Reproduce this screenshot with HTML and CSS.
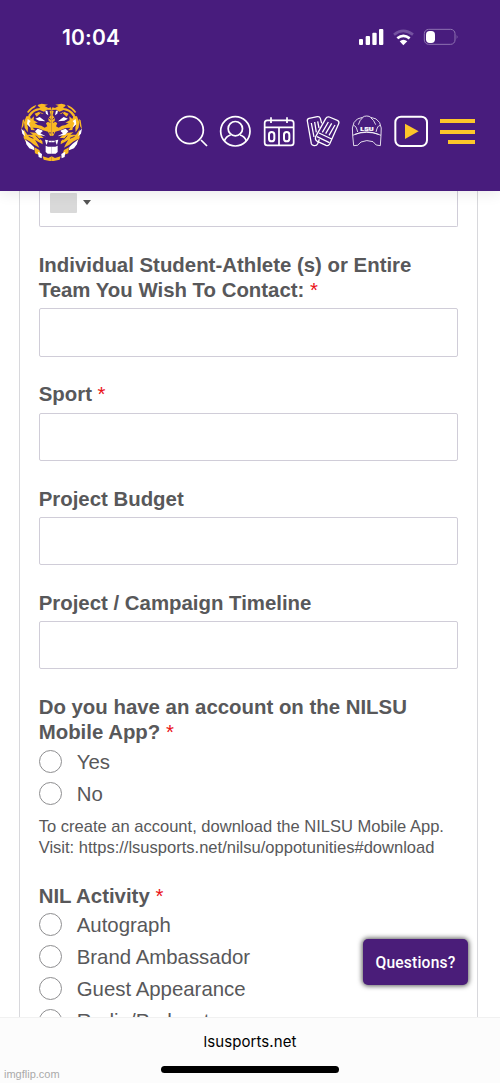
FILE: index.html
```html
<!DOCTYPE html>
<html lang="en">
<head>
<meta charset="utf-8">
<title>lsusports.net</title>
<link rel="stylesheet" href="styles.css">
</head>
<body>
<div class="phone">
  <header class="header">
    <div class="status">
      <span class="time">10:04</span>
      <svg class="status-icons" viewBox="54 36 306 60" fill="#fff">
        <rect x="57" y="72" width="12" height="18" rx="3"/>
        <rect x="77" y="63" width="13" height="27" rx="3"/>
        <rect x="97" y="53" width="13" height="37" rx="3"/>
        <rect x="117" y="42" width="13" height="48" rx="3"/>
        <g fill="none" stroke="#fff" stroke-width="8">
          <path d="M162 59Q190 36 219 59" stroke="#7452a0"/>
          <path d="M172 70Q190 55 209 70"/>
        </g>
        <path d="M179 79Q190 70 202 79L190 91Z"/>
        <rect x="253" y="43" width="92" height="45" rx="13" fill="none" stroke="#8e73b1" stroke-width="3"/>
        <rect x="258" y="48" width="27" height="36" rx="11"/>
        <path d="M350 59Q355 65 350 72Z" fill="#8e73b1"/>
      </svg>
    </div>
    <div class="nav">
      <svg class="logo" viewBox="62 38 184 174">
        <g id="half">
          <g fill="#f9b923">
            <path d="M80 65Q92 49 108 44L104 51Q92 56 84 68ZM84 74Q97 54 120 53L112 46Q112 42 124 40L143 43 133 47 144 53 152 51 154 59 140 58 131 64 118 59Q102 62 95 72L86 84Z"/>
            <path d="M154 60L148 62 151 75 144 84 145 93 137 99 141 108 133 112 123 106 112 104 103 98 113 97 100 90 101 78 92 86 88 77 78 78 71 96 73 112 82 126 83 112 80 100 90 110 92 119 105 120 97 112 112 113 128 120 143 124 149 136 154 137Z"/>
            <path d="M70 117L81 133 98 133 88 126 106 127 120 134 130 143 116 143 126 153 127 162 113 154 104 148 112 162 117 172 101 163 90 154 74 145 83 157 77 155 70 142Z"/>
            <path d="M102 171L117 179 123 196 104 189ZM127 198L144 203 154 198V212H148L130 208Z"/>
            <path d="M67 90L72 86 69 107 63 117ZM103 70L117 64 130 70 118 71 109 79Z"/>
          </g>
          <g fill="#fff">
            <path d="M105 85L118 80 135 93 116 91ZM135 61L141 61 144 75 137 70Z"/>
            <path d="M82 86L91 92 86 99 91 112 80 102ZM63 115L71 123 74 138 66 130ZM112 115L129 121 120 129 136 138 113 133 104 123Z"/>
            <path d="M75 148L91 160 101 170 102 180 87 174 78 162ZM113 184L125 191 124 204 115 200Z"/>
            <path d="M134 148L143 150 141 158 138 164ZM144 151H154V156H146ZM136 166L143 169H154V190H142L136 185Z"/>
          </g>
          <path fill="none" stroke="#481c7d" stroke-width="3" d="M141 79L151 87M137 91L150 96M118 67L131 77M107 136L119 149M126 121L138 129M85 138L99 144M149 125V130"/>
        </g>
        <use href="#half" transform="translate(308 0) scale(-1 1)"/>
      </svg>
      <div class="icons">
        <svg class="icon" viewBox="24 24 108 108"><circle cx="74" cy="75" r="41"/><path d="M108 105L126 123"/></svg>
        <svg class="icon" viewBox="156 24 108 108"><circle cx="211" cy="79" r="44"/><circle cx="211" cy="71" r="21.500"/><path d="M178 108Q183 94 197 90M244 108Q239 94 225 90"/></svg>
        <svg class="icon" viewBox="288 24 108 108"><rect x="299" y="46" width="87" height="75" rx="8"/><path d="M318 37V54M366 37V54M299 67H386M342 67V122"/><rect x="312" y="81" width="16" height="28" rx="8" stroke-width="6"/><rect x="357" y="81" width="16" height="28" rx="8" stroke-width="6"/></svg>
        <svg class="icon thin" viewBox="15 24 108 108">
          <path d="M58 103L53 116Q50 123 42 122Q36 121 34 116L22 48Q21 42 27 40L52 35Q59 34 61 40L65 55M34 54L42 96M44 51L49 82M53 49L57 69"/>
          <path d="M47 95L77 41Q81 34 88 36L112 46Q119 49 116 56L89 117Q85 124 78 121L52 109Q44 105 47 95ZM57 84L95 102M51 95L88 113M85 51L67 82M95 55L77 86M105 60L87 91"/>
        </svg>
        <svg class="icon cap" viewBox="147 24 108 108">
          <path d="M158 91Q151 41 188 37Q192 33 200 33Q208 33 212 37Q250 41 243 91M158 91Q199 70 243 91L241 122Q227 124 219 110Q200 103 183 111Q174 125 161 122ZM165 88Q200 76 236 88M188 38Q179 45 175 59M212 38Q222 45 227 59M161 62Q168 60 173 81M240 62Q233 60 228 81"/>
          <text x="201" y="77" textLength="40" lengthAdjust="spacingAndGlyphs">LSU</text>
        </svg>
        <svg class="icon" viewBox="279 24 108 108"><rect x="286" y="35" width="95" height="88" rx="17" stroke-width="6"/><path class="gold" d="M315 56L356 79 315 102Z"/></svg>
        <svg class="icon menu" viewBox="411 24 126 108"><path class="gold" d="M420 42H525V54H420ZM420 75H525V87H420ZM444 105H525V117H444Z"/></svg>
      </div>
    </div>
  </header>

  <main class="page">
    <form class="form">
      <div class="input phone-input"><span class="flag"></span><span class="caret"></span></div>
      <label class="label">Individual Student-Athlete (s) or Entire<br>Team You Wish To Contact: <i>*</i></label>
      <div class="input"></div>
      <label class="label">Sport <i>*</i></label>
      <div class="input"></div>
      <label class="label">Project Budget</label>
      <div class="input"></div>
      <label class="label">Project / Campaign Timeline</label>
      <div class="input"></div>
      <div class="label">Do you have an account on the NILSU<br>Mobile App? <i>*</i></div>
      <div class="options">
        <div class="option"><span class="radio"></span>Yes</div>
        <div class="option"><span class="radio"></span>No</div>
      </div>
      <p class="help">To create an account, download the NILSU Mobile App.<br>Visit: https://lsusports.net/nilsu/oppotunities#download</p>
      <div class="label">NIL Activity <i>*</i></div>
      <div class="options activity">
        <div class="option"><span class="radio"></span>Autograph</div>
        <div class="option"><span class="radio"></span>Brand Ambassador</div>
        <div class="option"><span class="radio"></span>Guest Appearance</div>
        <div class="option"><span class="radio"></span>Radio/Podcast</div>
      </div>
    </form>
  </main>
  <div class="questions">Questions?</div>

  <footer class="browser-bar">
    <div class="address">lsusports.net</div>
    <div class="home-indicator"></div>
    <span class="watermark">imgflip.com</span>
  </footer>
</div>
</body>
</html>
```
FILE: styles.css
```css
* { box-sizing: border-box; }
body { margin: 0; background: #fff; }
.phone {
  position: relative;
  width: 500px;
  height: 1083px;
  display: flex;
  flex-direction: column;
  overflow: hidden;
  font-family: "Liberation Sans", Arial, sans-serif;
  color: #58585a;
}
.header {
  height: 191px;
  flex: none;
  background: #481c7d;
  position: relative;
  z-index: 1;
  box-shadow: 0 2px 14px rgba(0, 0, 0, .09);
}
.status {
  height: 74px;
  padding: 0 40px 0 62px;
  display: flex;
  align-items: center;
  justify-content: space-between;
}
.time { font: 600 21px/26px Inter, sans-serif; letter-spacing: .15px; padding-top: 2px; color: #fff; }
.status-icons { width: 102px; height: 20px; }
.nav {
  height: 114px;
  display: flex;
  align-items: center;
  justify-content: space-between;
  padding: 0 21px 0 20.5px;
}
.logo { width: 61.3px; height: 58px; margin-top: 1px; }
.icons { display: flex; gap: 8px; }
.icon {
  width: 36px;
  height: 36px;
  fill: none;
  stroke: #fff;
  stroke-width: 5.2;
}
.icon.menu { width: 42px; }
.icon.thin { stroke-width: 3.9; }
.icon.cap { stroke-width: 2.5; }
.icon text {
  fill: #fff;
  stroke: #fff;
  stroke-width: .6;
  font: 900 18px Roboto, sans-serif;
  text-anchor: middle;
}
.icon .gold { fill: #fdc62a; stroke: none; }

.page { height: 826px; flex: none; overflow: hidden; padding: 0 22px 0 19px; }
.form {
  height: 870px;
  border: 1px solid #d8d8dc;
  border-width: 0 1px;
  padding: 0 19px 0 18.7px;
}
.input {
  height: 48.2px;
  border: 1px solid #d0cdd8;
  border-radius: 2px;
  margin-bottom: 25.8px;
}
.phone-input {
  height: 36px;
  border-top: 0;
  border-radius: 0 0 2px 2px;
  display: flex;
  align-items: flex-start;
  gap: 6px;
  padding: 2px 10px;
}
.flag { width: 27px; height: 20px; background: #d9d9d9; border-radius: 1px; }
.caret {
  border: 4px solid transparent;
  border-top: 5px solid #555;
  border-bottom: 0;
  margin-top: 7px;
}
.label {
  display: block;
  font-size: 20.4px;
  line-height: 25.5px;
  font-weight: bold;
  white-space: nowrap;
  margin-bottom: 4.7px;
}
.label i { font-style: normal; font-weight: normal; color: #ea1218; }
div.label { margin-bottom: .8px; }
.option {
  height: 31.8px;
  display: flex;
  align-items: center;
  gap: 15px;
  font-size: 20.4px;
  white-space: nowrap;
}
.radio {
  width: 23px;
  height: 23px;
  border: 1px solid #8e8e90;
  border-radius: 50%;
  margin-top: -2px;
}
.help {
  margin: 7px 0 25.8px;
  font-size: 16.54px;
  line-height: 20.3px;
  white-space: nowrap;
}
.questions {
  position: absolute;
  left: 363px;
  top: 939px;
  width: 105px;
  height: 46px;
  border-radius: 5px;
  background: #4a1d79;
  color: #fff;
  font: 500 15.6px/49px Roboto, sans-serif;
  letter-spacing: .2px;
  text-align: center;
  box-shadow: 0 0 5px 1px rgba(0, 0, 0, .65);
}
.browser-bar {
  flex: 1;
  position: relative;
  background: #fcfcfc;
  border-top: 1px solid #f1f1f1;
  display: flex;
  flex-direction: column;
  align-items: center;
  padding-top: 14px;
}
.address { font: 400 15px/20px Inter, sans-serif; letter-spacing: .08px; color: #000; }
.home-indicator { width: 178px; height: 7px; margin-top: 14px; border-radius: 4px; background: #000; }
.watermark {
  position: absolute;
  left: 4px;
  bottom: 2px;
  font-size: 11px;
  line-height: 13px;
  color: #aaa;
}
```
